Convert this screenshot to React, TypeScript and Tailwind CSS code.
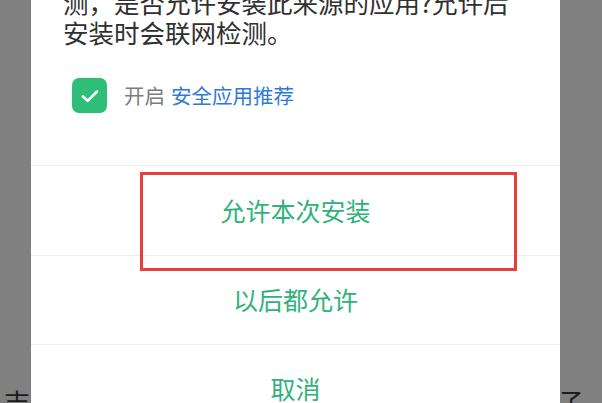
import React from 'react';

const font = { fontFamily: '"Noto Sans CJK SC", "Noto Sans", sans-serif' };

const actions = ['允许本次安装', '以后都允许', '取消'];

const App: React.FC = () => {
  return (
    <div
      className="relative h-[403px] w-[602px] overflow-hidden bg-[#808080]"
      style={font}
    >
      {/* Underlying page text peeking out below the dim layer */}
      <span className="absolute left-[4px] top-[387px] text-[26px] leading-[30px] text-[#1c1c1c]">吉</span>
      <span className="absolute left-[558px] top-[387px] text-[26px] leading-[30px] text-[#1c1c1c]">子</span>

      {/* Dialog */}
      <div className="relative ml-[31px] w-[529px] bg-white -mt-[13px]">
        <p className="px-[32px] text-[25.5px] leading-[30px] text-[#303030]">
          测，是否允许安装此来源的应用?允许后
          <br />
          安装时会联网检测。
        </p>

        <div className="mt-[31px] flex items-center pl-[41px]">
          <div className="flex h-[35px] w-[35px] items-center justify-center rounded-[7px] bg-[#2fbe77]">
            <svg width="22" height="22" viewBox="0 0 22 22" fill="none">
              <path d="M4 11.5l4.6 4.4L18 6.5" stroke="white" strokeWidth="2.6" strokeLinecap="round" strokeLinejoin="round" />
            </svg>
          </div>
          <span className="ml-[17px] text-[20.5px] text-[#7c7c7c]">开启</span>
          <span className="ml-[6px] text-[20.5px] text-[#2f7ad6]">安全应用推荐</span>
        </div>

        <div className="mt-[52px]">
          {actions.map((label, i) => (
            <div
              key={label}
              className={`flex items-center justify-center border-t border-[#ececec] text-[25px] text-[#2fb27b] ${
                i === 0 ? 'h-[90px]' : 'h-[89px]'
              }`}
            >
              {label}
            </div>
          ))}
        </div>
      </div>

      {/* Annotation frame */}
      <div className="absolute left-[140px] top-[172px] h-[99px] w-[377px] border-[3px] border-[#e5403f]" />
    </div>
  );
};

export default App;
